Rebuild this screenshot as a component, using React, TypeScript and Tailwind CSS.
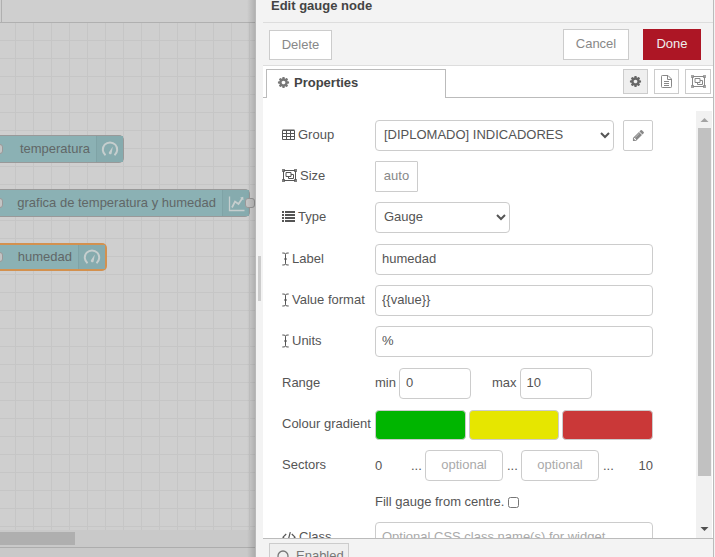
import type { ReactNode } from "react";

type IconProps = { className?: string };

function CogIcon({ className = "size-[13px]" }: IconProps) {
  return (
    <svg viewBox="0 0 1792 1792" fill="currentColor" className={className} aria-hidden="true">
      <path d="M1152 896q0-106-75-181t-181-75-181 75-75 181 75 181 181 75 181-75 75-181zm512-109v222q0 12-8 23t-20 13l-185 28q-19 54-39 91 35 50 107 138 10 12 10 25t-9 23q-27 37-99 108t-94 71q-12 0-26-9l-138-108q-44 23-91 38-16 136-29 186-7 28-36 28h-222q-14 0-24.5-8.5t-11.5-21.5l-28-184q-49-16-90-37l-141 107q-10 9-25 9-14 0-25-11-126-114-165-168-7-10-7-23 0-12 8-23 15-21 51-66.5t54-70.5q-27-50-41-99l-183-27q-13-2-21-12.5t-8-23.5v-222q0-12 8-23t19-13l186-28q14-46 39-92-40-57-107-138-10-12-10-24 0-10 9-23 26-36 98.5-107.5t94.5-71.5q13 0 26 10l138 107q44-23 91-38 16-136 29-186 7-28 36-28h222q14 0 24.5 8.5t11.5 21.5l28 184q49 16 90 37l142-107q9-9 24-9 13 0 25 10 129 119 165 170 7 8 7 22 0 12-8 23-15 21-51 66.5t-54 70.5q26 50 41 98l183 28q13 2 21 12.5t8 23.5z" />
    </svg>
  );
}

function PencilIcon() {
  return (
    <svg viewBox="0 0 1792 1792" fill="currentColor" className="size-[13px]" aria-hidden="true">
      <path d="M491 1536l91-91-235-235-91 91v107h128v128h107zm523-928q0-22-22-22-10 0-17 7l-542 542q-7 7-7 17 0 22 22 22 10 0 17-7l542-542q7-7 7-17zm-54-192l416 416-832 832h-416v-416zm683 96q0 53-37 90l-166 166-416-416 166-165q36-38 90-38 53 0 91 38l235 234q37 39 37 91z" />
    </svg>
  );
}

function FileTextIcon() {
  return (
    <svg viewBox="0 0 11 13" fill="none" stroke="currentColor" className="h-[13px] w-[11px]" aria-hidden="true">
      <path d="M.5 1.300q0-.8.8-.8h5.700l3.500 3.500v7.700q0 .8-.8.8h-8.400q-.8 0-.8-.8zM6.500.5v4h4M3 6.500h5M3 8.500h5M3 10.500h5" />
    </svg>
  );
}

function ObjectGroupIcon() {
  return (
    <svg viewBox="0 0 15 13" fill="none" stroke="currentColor" className="h-[13px] w-[15px]" aria-hidden="true">
      <path d="M2 1.500h11M2 11.500h11M1.500 2v9M13.500 2v9" />
      <path d="M0 0h3v3H0zM12 0h3v3h-3zM0 10h3v3H0zM12 10h3v3h-3z" fill="currentColor" fillOpacity=".75" stroke="none" />
      <path d="M4 3.500h5v4H4zM9 5.500h2.500v4H6.500v-2" />
    </svg>
  );
}

function TableIcon() {
  return (
    <svg viewBox="0 0 13 12" fill="none" stroke="currentColor" className="h-3 w-[13px]" aria-hidden="true">
      <path d="M.5 1.500h12v9H.5zM.5 1h12" />
      <path d="M.5 4.500h12M.5 7.500h12M4.500 1.500v9M8.500 1.500v9" />
    </svg>
  );
}

function ListIcon() {
  return (
    <svg viewBox="0 0 13 11" fill="currentColor" className="h-[11px] w-[13px]" aria-hidden="true">
      <path d="M0 0h2v2H0zM0 3h2v2H0zM0 6h2v2H0zM0 9h2v2H0zM3 0h10v2H3zM3 3h10v2H3zM3 6h10v2H3zM3 9h10v2H3z" />
    </svg>
  );
}

function CursorIcon() {
  return (
    <svg viewBox="0 0 7 14" fill="none" stroke="currentColor" className="h-[14px] w-[7px]" aria-hidden="true">
      <path d="M.3 1q3.200-.5 3.200 1.500v9q0 2-3.200 1.500M6.700 1q-3.200-.5-3.200 1.500M3.500 11.500q0 2 3.200 1.500M2 7h3" />
    </svg>
  );
}

function CodeIcon() {
  return (
    <svg viewBox="0 0 14 12" fill="none" stroke="currentColor" strokeWidth="1.200" className="h-3 w-[14px]" aria-hidden="true">
      <path d="M4.200 3L1 6.200l3.200 3.200M9.800 3L13 6.200 9.800 9.400M8.300 1.200L5.700 11" />
    </svg>
  );
}

function GaugeIcon() {
  return (
    <svg viewBox="0 0 18 18" fill="none" stroke="#c6cece" className="size-[18px]" aria-hidden="true">
      <path d="M4.500 15.200A7.200 7.200 0 1 1 13.500 15.200" strokeWidth="2" />
      <path d="M11.800 6.500L10.600 13.500a1.500 1.500 0 0 1-2.800-1z" fill="#c6cece" stroke="none" />
    </svg>
  );
}

function ChartIcon() {
  return (
    <svg viewBox="0 0 17 17" fill="none" stroke="#c6cece" className="size-[17px]" aria-hidden="true">
      <path d="M1.500 1.500v14h15" strokeWidth="1.300" />
      <path d="M4 12.500L7 6.500 10.500 9 14.500 3" strokeWidth="1.700" />
      <path d="M12 2.800l3.200-1 .3 3.400z" fill="#c6cece" stroke="none" />
    </svg>
  );
}

function FlowNode({ label, icon, place, selected = false, output = false }: {
  label: string;
  icon: ReactNode;
  place: string;
  selected?: boolean;
  output?: boolean;
}) {
  return (
    <div className={`absolute left-0 flex h-7 items-stretch rounded-r-[5px] bg-[#8bb1b4] ${selected ? "border-2 border-l-0 border-[#d3914f]" : "border border-l-0 border-[#999]"} ${place}`}>
      <span className="absolute top-1/2 -left-[7px] size-[10px] -translate-y-1/2 rounded-[3px] border border-[#999] bg-[#c4c4c4]" />
      <span className="flex flex-1 items-center justify-end pr-[6px] whitespace-nowrap text-[#616767]">{label}</span>
      <span className="flex w-[27px] items-center justify-center border-l border-[#7fa3a6] bg-[#86abae]">{icon}</span>
      {output && (
        <span className="absolute top-1/2 -right-[6px] size-[10px] -translate-y-1/2 rounded-[3px] border border-[#999] bg-[#c4c4c4]" />
      )}
    </div>
  );
}

function Workspace() {
  return (
    <section className="relative flex w-64 shrink-0 flex-col overflow-hidden border-r border-[#b8b8b8] bg-[#c9c9c9]">
      <div className="h-[23px] shrink-0 border-b border-[#b0b0b0] bg-[#cfcfcf] pl-px">
        <div className="h-full border-l border-[#b0b0b0]" />
      </div>
      <div className="relative flex-1 bg-[#cfcfcf] bg-[linear-gradient(to_right,#c6c6c6_1px,transparent_1px),linear-gradient(to_bottom,#c6c6c6_1px,transparent_1px)] bg-[size:18px_18px] bg-[position:15px_17px]">
        <FlowNode label="temperatura" icon={<GaugeIcon />} place="top-28 w-[124px]" />
        <FlowNode label="grafica de temperatura y humedad" icon={<ChartIcon />} place="top-[166px] w-[250px]" output />
        <FlowNode label="humedad" icon={<GaugeIcon />} place="top-[220px] w-[107px]" selected />
      </div>
      <div className="h-[18px] shrink-0 border-b border-[#adadad] py-[2px]">
        <div className="h-[13px] w-[75px] bg-[#afafaf]" />
      </div>
      <div className="h-[9px] shrink-0" />
      <div className="absolute inset-y-0 right-0 w-2 bg-linear-to-r from-transparent to-black/15" />
    </section>
  );
}

const field = "h-[31px] rounded-[4px] border border-[#ccc] bg-white pb-[2px] text-[#555] placeholder:text-[#aaa] outline-none";
const button = "flex items-center justify-center border border-[#ccc] bg-white text-[#888]";

function Row({ label, icon, htmlFor, children }: { label: string; icon?: ReactNode; htmlFor?: string; children: ReactNode }) {
  return (
    <div className="flex h-[31px] items-center">
      <label htmlFor={htmlFor} className="flex w-[93px] shrink-0 items-center gap-[3px] pb-[2px] whitespace-nowrap">
        {icon}
        {label}
      </label>
      <div className="flex min-w-0 flex-1 items-center">{children}</div>
    </div>
  );
}

function TextRow({ id, label, value }: { id: string; label: string; value: string }) {
  return (
    <Row label={label} icon={<CursorIcon />} htmlFor={id}>
      <input id={id} type="text" defaultValue={value} className={`${field} w-full px-[6px]`} />
    </Row>
  );
}

function PropertiesForm() {
  return (
    <form className="flex min-w-0 flex-1 flex-col gap-[11px] pt-[9px] pr-[43px] pl-[19px]">
      <div className="flex flex-col gap-[10px]">
        <Row label="Group" icon={<TableIcon />} htmlFor="group">
          <select id="group" className={`${field} min-w-0 flex-1 px-1`}>
            <option>[DIPLOMADO] INDICADORES</option>
          </select>
          <button type="button" aria-label="Edit group" className={`${button} ml-[9px] h-[31px] w-[30px] rounded-[2px]`}>
            <PencilIcon />
          </button>
        </Row>
        <Row label="Size" icon={<ObjectGroupIcon />} htmlFor="size">
          <button id="size" type="button" className={`${button} h-[31px] w-[43px] rounded-[1px] pb-[2px]`}>auto</button>
        </Row>
        <Row label="Type" icon={<ListIcon />} htmlFor="type">
          <select id="type" className={`${field} w-[135px] px-1`}>
            <option>Gauge</option>
          </select>
        </Row>
      </div>
      <div className="flex flex-col gap-[10px]">
        <TextRow id="label" label="Label" value="humedad" />
        <TextRow id="format" label="Value format" value="{{value}}" />
        <TextRow id="units" label="Units" value="%" />
      </div>
      <div className="flex flex-col gap-[10px]">
        <Row label="Range" htmlFor="min">
          <label htmlFor="min" className="pb-[2px]">min</label>
          <input id="min" type="text" defaultValue="0" className={`${field} ml-[3px] w-[72px] px-[6px]`} />
          <label htmlFor="max" className="ml-[21px] pb-[2px]">max</label>
          <input id="max" type="text" defaultValue="10" className={`${field} ml-[3px] w-[72px] px-[6px]`} />
        </Row>
        <Row label="Colour gradient">
          <div className="flex flex-1 gap-[3px]">
            <button type="button" aria-label="Low colour" className="h-[30px] flex-1 rounded-[4px] border border-[#ccc] bg-[#00b500]" />
            <button type="button" aria-label="Middle colour" className="h-[30px] flex-1 rounded-[4px] border border-[#ccc] bg-[#e6e600]" />
            <button type="button" aria-label="High colour" className="h-[30px] flex-1 rounded-[4px] border border-[#ccc] bg-[#ca3838]" />
          </div>
        </Row>
        <Row label="Sectors" htmlFor="seg1">
          <span className="w-9">0</span>
          <span className="w-[14px]">...</span>
          <input id="seg1" type="text" placeholder="optional" className={`${field} w-[78px] text-center`} />
          <span className="ml-1 w-[14px]">...</span>
          <input aria-label="Second sector" type="text" placeholder="optional" className={`${field} w-[78px] text-center`} />
          <span className="ml-1">...</span>
          <span className="ml-auto">10</span>
        </Row>
      </div>
      <div className="flex flex-col gap-[10px]">
        <div className="flex h-5 items-center gap-1 pl-[93px]">
          <label htmlFor="fill">Fill gauge from centre.</label>
          <input id="fill" type="checkbox" className="size-[11px]" />
        </div>
        <Row label="Class" icon={<CodeIcon />} htmlFor="class">
          <input id="class" type="text" placeholder="Optional CSS class name(s) for widget" className={`${field} w-full px-[6px]`} />
        </Row>
      </div>
    </form>
  );
}

function ScrollBar() {
  return (
    <div className="flex w-4 shrink-0 flex-col items-center bg-[#f1f1f1]">
      <svg viewBox="0 0 16 17" className="h-[17px] w-4 shrink-0" aria-hidden="true">
        <path d="M4.500 11L8.500 7l4 4z" fill="#a3a3a3" />
      </svg>
      <div className="w-[13px] flex-1 bg-[#c1c1c1]" />
      <div className="h-[45px] shrink-0" />
      <svg viewBox="0 0 16 17" className="h-[17px] w-4 shrink-0" aria-hidden="true">
        <path d="M4.500 6l4 4 4-4z" fill="#505050" />
      </svg>
    </div>
  );
}

function EditTray() {
  return (
    <section className="flex min-w-0 flex-1 flex-col border-r border-[#bbb] bg-white">
      <header className="flex h-[23px] shrink-0 items-end border-b border-[#ddd] bg-[#f3f3f3] px-2">
        <h1 className="pb-[6px] leading-5 font-bold text-[#444]">Edit gauge node</h1>
      </header>
      <div className="flex h-[43px] shrink-0 items-center border-b border-[#ddd] bg-[#f3f3f3] pt-px pr-3 pl-[6px]">
        <button type="button" className={`${button} h-[30px] w-[63px]`}>Delete</button>
        <button type="button" className={`${button} ml-auto h-[31px] w-[66px] pb-[2px]`}>Cancel</button>
        <button type="button" className="ml-[14px] h-[31px] w-[58px] bg-[#ad1625] pb-[2px] text-[#eee]">Done</button>
      </div>
      <nav className="flex h-8 shrink-0 items-end">
        <span className="h-full w-[3px] border-b border-[#bbb]" />
        <button type="button" className="flex h-[29px] w-[180px] items-center gap-1 border border-b-0 border-[#bbb] bg-white pb-[3px] pl-[10px] font-bold text-[#444]">
          <span className="text-[#777]"><CogIcon /></span>
          Properties
        </button>
        <div className="flex h-full flex-1 items-center justify-end gap-[6px] border-b border-[#bbb] pr-[2px]">
          <button type="button" aria-label="Properties" className="flex size-[25px] items-center justify-center border border-[#ccc] bg-[#efefef] text-[#666]"><CogIcon /></button>
          <button type="button" aria-label="Description" className={`${button} size-[25px]`}><FileTextIcon /></button>
          <button type="button" aria-label="Appearance" className={`${button} h-[25px] w-[26px]`}><ObjectGroupIcon /></button>
        </div>
      </nav>
      <div className="flex min-h-0 flex-1 overflow-hidden pt-[13px] pr-px">
        <PropertiesForm />
        <ScrollBar />
      </div>
      <footer className="h-[19px] shrink-0 overflow-hidden border-t border-[#bbb] bg-[#f3f3f3] px-[6px] pt-1">
        <button type="button" className="flex h-[26px] w-20 items-center gap-[7px] border border-[#ccc] bg-[#efefef] pl-[7px] text-[#777]">
          <svg viewBox="0 0 12 12" fill="none" stroke="currentColor" strokeWidth="1.300" className="size-3" aria-hidden="true">
            <circle cx="6" cy="6" r="5" />
          </svg>
          Enabled
        </button>
      </footer>
    </section>
  );
}

export default function App() {
  return (
    <main className="flex h-screen overflow-hidden bg-[#f3f3f3] pr-px font-['Liberation_Sans',Arial,sans-serif] text-[13px] leading-5 text-[#555]">
      <Workspace />
      <div className="flex w-[7px] shrink-0 items-center justify-center bg-[#f3f3f3]">
        <div className="h-[45px] w-[3px] bg-[#ccc]" />
      </div>
      <EditTray />
    </main>
  );
}
